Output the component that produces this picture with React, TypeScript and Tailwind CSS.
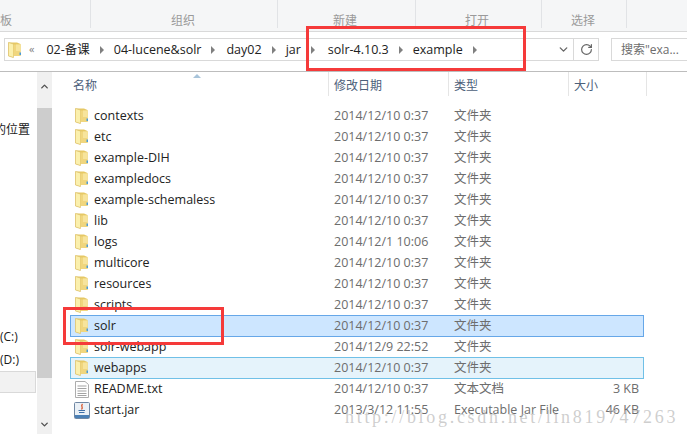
import { ChevronDown, ChevronUp, RotateCw } from 'lucide-react'

type Row = { name: string; date: string; type: string; size?: string; kind?: 'txt' | 'jar'; state?: 'selected' | 'hover' }

const rows: Row[] = [
  { name: 'contexts', date: '2014/12/10 0:37', type: '文件夹' },
  { name: 'etc', date: '2014/12/10 0:37', type: '文件夹' },
  { name: 'example-DIH', date: '2014/12/10 0:37', type: '文件夹' },
  { name: 'exampledocs', date: '2014/12/10 0:37', type: '文件夹' },
  { name: 'example-schemaless', date: '2014/12/10 0:37', type: '文件夹' },
  { name: 'lib', date: '2014/12/10 0:37', type: '文件夹' },
  { name: 'logs', date: '2014/12/1 10:06', type: '文件夹' },
  { name: 'multicore', date: '2014/12/10 0:37', type: '文件夹' },
  { name: 'resources', date: '2014/12/10 0:37', type: '文件夹' },
  { name: 'scripts', date: '2014/12/10 0:37', type: '文件夹' },
  { name: 'solr', date: '2014/12/10 0:37', type: '文件夹', state: 'selected' },
  { name: 'solr-webapp', date: '2014/12/9 22:52', type: '文件夹' },
  { name: 'webapps', date: '2014/12/10 0:37', type: '文件夹', state: 'hover' },
  { name: 'README.txt', date: '2014/12/10 0:37', type: '文本文档', size: '3 KB', kind: 'txt' },
  { name: 'start.jar', date: '2013/3/12 11:55', type: 'Executable Jar File', size: '46 KB', kind: 'jar' },
]

function FolderIcon() {
  return (
    <svg width="13" height="16" viewBox="0 0 13 16" className="shrink-0">
      <path d="M0.5 0.5 H9 L12.5 2 V14 H5 V15.5 L0.5 14 Z" fill="#e6c865" />
      <path d="M0.5 0.5 L5.5 2 V15.5 L0.5 14 Z" fill="#fbf0ad" stroke="#dcc06a" strokeWidth="0.7" />
      <path d="M5.5 2.5 H12.5 V14 H5.5 Z" fill="#f0d67e" />
      <path d="M8 2.5 H12.5 V9 H8 Z" fill="#f7e49c" />
      <rect x="11.5" y="10.5" width="1.5" height="2.5" fill="#4a9bd8" />
    </svg>
  )
}

function TxtIcon() {
  return (
    <svg width="14" height="17" viewBox="0 0 14 17" className="shrink-0">
      <path d="M0.5 0.5 H10 L13.5 3.5 V16.5 H0.5 Z" fill="#fff" stroke="#adadad" />
      <path d="M2.5 5 H11.5 M2.5 7.5 H11.5 M2.5 10 H11.5 M2.5 12.5 H11.5 M2.5 14.5 H11.5" stroke="#a3a3a3" />
    </svg>
  )
}

function JarIcon() {
  return (
    <svg width="16" height="17" viewBox="0 0 16 17" className="shrink-0 -ml-[1px]">
      <rect x="0.5" y="0.5" width="15" height="16" rx="1" fill="#eaf0f6" stroke="#6f87a3" />
      <path d="M8.5 2 C6 4.5 10 5 7.5 7.5" stroke="#d8552a" strokeWidth="1.3" fill="none" />
      <path d="M4.5 8.5 H11 M5 10.5 H10.5" stroke="#3d6fa8" strokeWidth="1.2" />
      <rect x="1" y="13" width="14" height="3" fill="#4a7fb5" />
    </svg>
  )
}

function Crumb({ label, extra = '' }: { label: string; extra?: string }) {
  return (
    <>
      <span className="whitespace-nowrap">{label}</span>
      <span className={`w-0 h-0 border-y-[4px] border-y-transparent border-l-[4px] border-l-[#808080] ${extra}`} />
    </>
  )
}

export default function App() {
  return (
    <div className="w-[687px] h-[434px] relative overflow-hidden bg-white text-[12.5px] text-[#1a1a1a] font-['Open_Sans','Noto_Sans_CJK_SC',sans-serif]">
      {/* ribbon */}
      <div className="h-[31px] bg-[#f5f6f7] flex text-[#9a9a9a] text-[12px]">
        <div className="w-[91px] border-r border-[#e1e3e6] h-[28px] flex items-end"><span className="-mb-[2px]">板</span></div>
        <div className="w-[187px] border-r border-[#e1e3e6] h-[28px] flex items-end pl-[80px]"><span className="-mb-[2px]">组织</span></div>
        <div className="w-[138px] border-r border-[#e1e3e6] h-[28px] flex items-end pl-[55px]"><span className="-mb-[2px]">新建</span></div>
        <div className="w-[126px] border-r border-[#e1e3e6] h-[28px] flex items-end pl-[49px]"><span className="-mb-[2px]">打开</span></div>
        <div className="w-[85px] border-r border-[#e1e3e6] h-[28px] flex items-end pl-[29px]"><span className="-mb-[2px]">选择</span></div>
      </div>

      {/* address bar */}
      <div className="h-[41px] bg-white border-t border-t-[#d9d9d9] border-b border-b-[#bdbdbd] flex items-start pt-[6px] pl-1">
        <div className="h-[23px] w-[595px] shrink-0 flex items-center border border-[#d9d9d9]">
          <span className="ml-[3px]"><FolderIcon /></span>
          <span className="ml-[8px] text-[#808080] text-[11px]">«</span>
          <div className="ml-[12px] pt-[1px] flex items-center gap-[10px] text-[#222]">
            <Crumb label="02-备课" />
            <Crumb label="04-lucene&solr" extra="mr-[1px]" />
            <Crumb label="day02" />
            <Crumb label="jar" extra="mr-[3px]" />
            <Crumb label="solr-4.10.3" />
            <Crumb label="example" />
          </div>
          <ChevronDown className="w-[13px] h-[13px] ml-auto mr-[3px] text-[#666]" strokeWidth={2.5} />
          <div className="w-[25px] h-full border-l border-[#d9d9d9] flex items-center justify-center">
            <RotateCw className="w-[13px] h-[13px] text-[#666]" strokeWidth={2.2} />
          </div>
        </div>
        <div className="ml-3 w-[80px] shrink-0 h-[23px] border border-[#d9d9d9] flex items-center pl-[9px] text-[#6d6d6d] text-[12px] whitespace-nowrap overflow-hidden">
          搜索"exa...
        </div>
      </div>

      <div className="flex h-[362px]">
        {/* nav pane */}
        <div className="w-[37px] shrink-0 flex flex-col text-[12px] leading-[18px] overflow-hidden">
          <span className="mt-[49px] -ml-[6px] whitespace-nowrap">的位置</span>
          <span className="mt-[189px]">(C:)</span>
          <span className="mt-[5px]">(D:)</span>
          <div className="mt-[2px] w-[36px] h-[22px] bg-[#f2f2f2] border border-[#d9d9d9] border-l-0" />
        </div>
        {/* nav scrollbar */}
        <div className="w-[15px] shrink-0 mr-[2px] bg-[#f0f0f0] flex flex-col items-center">
          <div className="h-[36px] w-full flex items-center justify-center pb-[8px]">
            <ChevronUp className="w-[11px] h-[11px] text-[#505050]" strokeWidth={3} />
          </div>
          <div className="w-full h-[270px] bg-[#cdcdcd]" />
          <ChevronDown className="w-[11px] h-[11px] mt-[41px] text-[#505050]" strokeWidth={3} />
        </div>

        {/* file list */}
        <div className="flex-1">
          <div className="h-[31px] flex text-[12px] text-[#4c607a]">
            <div className="w-[274px] pl-[19px] pb-[3px] flex items-center relative">
              名称
              <span className="absolute left-[139px] top-[2px] w-0 h-0 border-x-[4px] border-x-transparent border-b-[4px] border-b-[#a8c4da]" />
            </div>
            <div className="w-[120px] h-[24px] pl-[5px] pt-[4px] flex items-center border-l border-[#e5e5e5]">修改日期</div>
            <div className="w-[120px] h-[24px] pl-[5px] pt-[4px] flex items-center border-l border-[#e5e5e5]">类型</div>
            <div className="w-[79px] h-[24px] pl-[5px] pt-[4px] flex items-center border-x border-[#e5e5e5]">大小</div>
          </div>
          <div className="flex flex-col pt-[2px] pl-[16px]">
            {rows.map((r) => (
              <div
                key={r.name}
                className={`w-[574px] h-[22px] -mb-[1px] flex items-center border ${
                  r.state === 'selected'
                    ? 'bg-[#cde6ff] border-[#66a7e8]'
                    : r.state === 'hover'
                      ? 'bg-[#e5f3fb] border-[#70c0e7]'
                      : 'border-transparent'
                }`}
              >
                <div className="w-[263px] pl-[4px] flex items-center gap-[6px] text-[#222]">
                  <span className="w-[13px] shrink-0 flex justify-start">
                    {r.kind === 'txt' ? <TxtIcon /> : r.kind === 'jar' ? <JarIcon /> : <FolderIcon />}
                  </span>
                  <span>{r.name}</span>
                </div>
                <div className="w-[120px] text-[#6d6d6d] whitespace-nowrap">{r.date}</div>
                <div className="w-[120px] text-[#6d6d6d] whitespace-nowrap">{r.type}</div>
                <div className="w-[65px] text-right text-[#6d6d6d] whitespace-nowrap">{r.size}</div>
              </div>
            ))}
          </div>
        </div>
      </div>

      {/* red annotation boxes */}
      <div className="absolute left-[306px] top-[26px] w-[220px] h-[45px] border-[3px] border-[#f53a3a]" />
      <div className="absolute left-[63px] top-[307px] w-[161px] h-[38px] border-[3px] border-[#f53a3a]" />

      {/* watermark */}
      <div className="absolute left-[345px] top-[404px] text-[18px] tracking-[2.7px] text-[#b9b9b9]/70 font-['Liberation_Serif',serif] whitespace-nowrap">
        http://blog.csdn.net/lin819747263
      </div>
    </div>
  )
}
